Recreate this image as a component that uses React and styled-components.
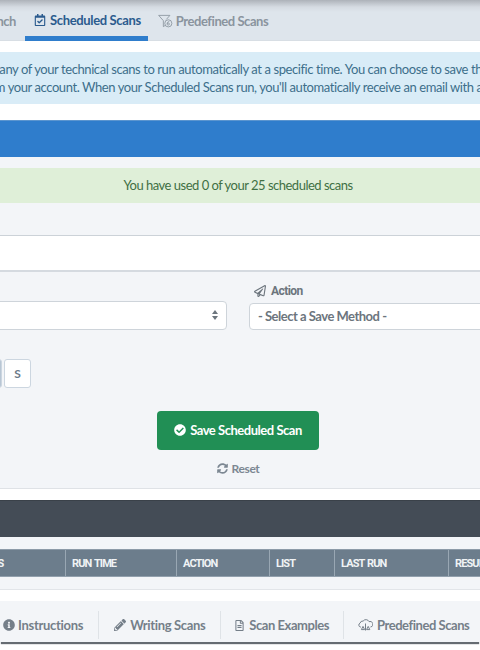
import React from 'react';
import styled, { createGlobalStyle } from 'styled-components';
import { FaCheckCircle, FaSyncAlt, FaInfoCircle, FaPencilAlt, FaRegFileAlt, FaRegPaperPlane, FaRegCalendarCheck } from 'react-icons/fa';

const Global = createGlobalStyle`
  html, body { margin: 0; padding: 0; background: #fff; }
  body { font-family: Lato, "Liberation Sans", sans-serif; overflow: hidden; }
  svg { flex: none; }
`;
const Page = styled.div`
  width: 480px; height: 650px; overflow: hidden; background: #fff;
  display: flex; flex-direction: column;
`;
const TabBar = styled.div`
  height: 41px; flex: none; box-sizing: border-box; display: flex; align-items: flex-start;
  background: linear-gradient(#adb2b9 0, #d5dbe2 7px, #dee5ec 12px);
  border-bottom: 1px solid #d8dee4; margin-left: -28px;
`;
const Tab = styled.div`
  display: flex; align-items: center; gap: ${p => (p.$active ? 4 : 3)}px; height: 41px; box-sizing: border-box;
  padding: ${p => (p.$active ? '4px 7px 0 9px' : '0 7px 0 10px')};
  font-size: 13px; font-weight: 700; letter-spacing: ${p => (p.$active ? '-.35px' : '-.45px')};
  color: ${p => (p.$active ? '#2b5b8e' : '#8a949e')};
  border-bottom: ${p => (p.$active ? '5px solid #2f7dcc' : '0')};
  white-space: nowrap;
`;
const FirstTab = styled(Tab)`width: 53px; padding: 0 9px 0 0; justify-content: flex-end;`;
const InfoWrap = styled.div`padding: 11px 0 16px; flex: none;`;
const Info = styled.div`
  height: 52px; background: #d9ecf7; color: #3d6f8b; font-size: 13px; letter-spacing: -.42px; line-height: 18px;
  box-sizing: border-box; padding-top: 8px; white-space: nowrap; overflow: hidden;
`;
const InfoLine = styled.div`margin-left: ${p => p.$left}px;`;
const BlueBar = styled.div`height: 37px; flex: none; background: #2f7dcc; border-top: 1px solid #5b95cf; box-sizing: border-box;`;
const Section = styled.div`background: #f3f5f8; flex: none; padding-top: 11px;`;
const Used = styled.div`
  height: 35px; background: #dfefd8; color: #3f7044; font-size: 13px; letter-spacing: -.5px; display: flex; align-items: center; justify-content: center; padding: 0 4px 1px 0; box-sizing: border-box;
`;
const Wide = styled.div`height: 37px; box-sizing: border-box; margin-top: 32px; background: #fff; border-top: 1px solid #ccd2d8; border-bottom: 2px solid #d5dae0;`;
const FormRow = styled.div`display: flex; gap: 22px; margin-top: 11px; margin-left: -20px; height: 47px;`;
const Col = styled.div`display: flex; flex-direction: column; justify-content: flex-end; width: ${p => p.$w}px; flex: none;`;
const Label = styled.div`
  display: flex; align-items: center; gap: 5px; height: 18px; margin-left: 5px; margin-bottom: 3px;
  font-family: Roboto, sans-serif; font-weight: 700; font-size: 12px; color: #6c757d; letter-spacing: -.55px;
  svg { font-size: 12px; }
`;
const Select = styled.div`
  height: 29px; box-sizing: border-box; background: #fff; border: 1px solid #ced4da; border-radius: 4px;
  display: flex; align-items: center; justify-content: space-between; padding: 0 8px 1px;
  color: #6c757d; font-size: 13px; letter-spacing: -.5px; font-weight: 700;
`;
const Days = styled.div`display: flex; gap: 2px; margin-top: 29px; margin-left: -25px;`;
const Day = styled.div`
  width: 27px; height: 29px; box-sizing: border-box; border-radius: 3px; background: ${p => (p.$on ? '#b8c6d4' : '#fff')};
  border: 1px solid #ccd6e0; display: flex; align-items: center; justify-content: center;
  font-size: 12px; font-weight: 700; color: #6c7a88;
`;
const Actions = styled.div`display: flex; flex-direction: column; align-items: center; margin-top: 23px; margin-left: -4px; padding-bottom: 12px; border-bottom: 1px solid #dfe2e6;`;
const Save = styled.div`
  width: 162px; height: 39px; box-sizing: border-box; padding-bottom: 1px; background: #218f55; border-radius: 4px; color: #fff; font-size: 13px; letter-spacing: -.47px; font-weight: 700;
  display: flex; align-items: center; justify-content: center; gap: 4px;
`;
const Reset = styled.div`
  display: flex; align-items: center; gap: 4px; margin-top: 10px; height: 16px; color: #7c8792; font-size: 12px; letter-spacing: -.4px; font-weight: 700;
  svg { font-size: 11px; }
`;
const Spacer = styled.div`height: ${p => p.$h}px; flex: none;`;
const DarkBar = styled.div`height: 37px; background: #444c56; border-top: 1px solid #3a4149; flex: none; box-sizing: border-box;`;
const TableZone = styled.div`background: #f3f5f8; padding-top: 12px; flex: none; border-bottom: 1px solid #e2e5e9;`;
const THead = styled.div`
  display: flex; height: 28px; box-sizing: border-box; background: #6c7d8c; border-top: 1px solid #8d9ba8; border-bottom: 1px solid #92a0ad;
  margin-left: -34px; white-space: nowrap;
`;
const Th = styled.div`
  width: ${p => p.$w}px; flex: none; box-sizing: border-box; padding-left: 6px; border-right: 1px solid #99a7b3;
  display: flex; align-items: center; color: #f0f3f5; font-family: Roboto, sans-serif; font-weight: 700; font-size: 11px; letter-spacing: -.9px; word-spacing: 1px;
`;
const TBody = styled.div`height: 12px;`;
const Bottom = styled.div`
  height: 41px; flex: none; background: #f3f5f8; display: flex; align-items: center; margin-top: 11px; padding-top: 7px;
  box-shadow: 0 3px 1px -1px #666c72; box-sizing: border-box; white-space: nowrap;
`;
const Link = styled.div`
  display: flex; align-items: center; gap: ${p => p.$gap || 4}px; height: 28px; padding: 0 15px; flex: none; box-sizing: border-box;
  border-right: 1px solid #dfe3e7;
  font-size: 13px; letter-spacing: ${p => p.$ls || '-.35px'}; font-weight: 700; color: #757f89;
`;
const FirstLink = styled(Link)`margin-left: -12px;`;
const ExampleLink = styled(Link)`padding: 0 14px 0 13px;`;
const LastLink = styled(Link)`border-right: 0; padding-left: 14px;`;

const Funnel = () => (
  <svg width="15" height="14" viewBox="0 0 16 14" fill="none" stroke="#8a949e" strokeWidth="0.9">
    <path d="M.7 1h12l-3.8 4.3M.7 1l5 5.6V13l1.8-1.2" />
    <circle cx="11" cy="9.5" r="3.8" />
    <path d="M12 7.6c-1.4 0-2.2 1-2.2 2.4s.6 1.4 1.2 1.4 1.2-.5 1.2-1.2-.6-1.1-1.2-1.1-1.1.4-1.2.9" />
  </svg>
);
const CloudScale = () => (
  <svg width="15" height="12" viewBox="0 0 15 12" fill="none" stroke="#757f89" strokeWidth="1">
    <path d="M3 8H2.5A2 2 0 0 1 2 4.2 3 3 0 0 1 5.2 2 3.4 3.4 0 0 1 11 2.6 2.8 2.8 0 0 1 13 8h-.5" />
    <path d="M5 7.4 3.4 10.6h3.2zM7.5 4.5v7M10.2 7.4 8.6 10.6h3.2z" />
  </svg>
);
const Updown = () => (
  <svg width="6" height="10" viewBox="0 0 6 10" fill="#6c757d">
    <path d="M3 0 6 4H0zM3 10 0 6h6z" />
  </svg>
);

export default function App() {
  return (
    <Page>
      <Global />
      <TabBar>
        <FirstTab>Launch</FirstTab>
        <Tab $active><FaRegCalendarCheck size={12} color="#2b5b8e" />Scheduled Scans</Tab>
        <Tab><Funnel />Predefined Scans</Tab>
      </TabBar>
      <InfoWrap>
        <Info>
          <InfoLine $left={-52}>Schedule any of your technical scans to run automatically at a specific time. You can choose to save the results to a</InfoLine>
          <InfoLine $left={-38}>list from your account. When your Scheduled Scans run, you'll automatically receive an email with a link to the results.</InfoLine>
        </Info>
      </InfoWrap>
      <BlueBar />
      <Section>
        <Used>You have used 0 of your 25 scheduled scans</Used>
        <Wide />
        <FormRow>
          <Col $w={247}><Select><span /><Updown /></Select></Col>
          <Col $w={300}>
            <Label><FaRegPaperPlane />Action</Label>
            <Select>- Select a Save Method -</Select>
          </Col>
        </FormRow>
        <Days>
          <Day $on>F</Day>
          <Day>S</Day>
        </Days>
        <Actions>
          <Save><FaCheckCircle size={12} />Save Scheduled Scan</Save>
          <Reset><FaSyncAlt />Reset</Reset>
        </Actions>
      </Section>
      <Spacer $h={11} />
      <DarkBar />
      <TableZone>
        <THead>
          <Th $w={100}>SCANS</Th>
          <Th $w={111}>RUN TIME</Th>
          <Th $w={93}>ACTION</Th>
          <Th $w={65}>LIST</Th>
          <Th $w={114}>LAST RUN</Th>
          <Th $w={80}>RESULTS</Th>
        </THead>
        <TBody />
      </TableZone>
      <Bottom>
        <FirstLink $gap={3} $ls="-.3px"><FaInfoCircle size={12} />Instructions</FirstLink>
        <Link><FaPencilAlt size={12} />Writing Scans</Link>
        <ExampleLink $ls="-.45px"><FaRegFileAlt size={11} />Scan Examples</ExampleLink>
        <LastLink $ls="-.45px"><CloudScale />Predefined Scans</LastLink>
      </Bottom>
    </Page>
  );
}
